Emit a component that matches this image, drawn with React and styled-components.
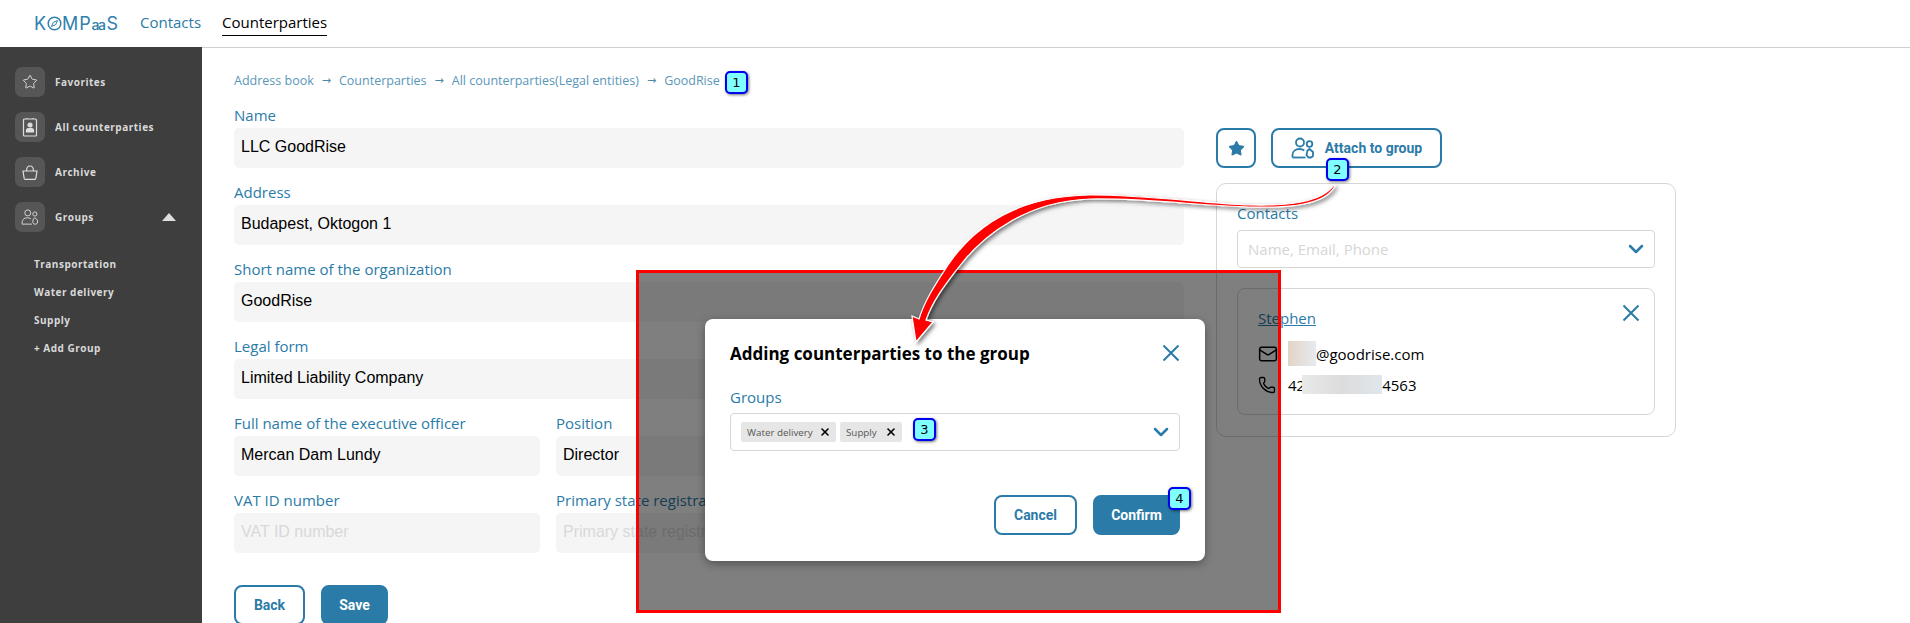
import React from 'react';
import styled, { createGlobalStyle } from 'styled-components';
import { ChevronDown, Mail, Phone, Star, X } from 'lucide-react';

const BLUE = '#2b7ba8';
const UI_FONT = '"Open Sans", "Noto Sans", sans-serif';

const GlobalStyle = createGlobalStyle`
  html, body {
    margin: 0;
    height: 623px;
    overflow: hidden;
    background: #ffffff;
    font-family: ${UI_FONT};
  }
  * {
    box-sizing: border-box;
  }
`;

const Page = styled.div`
  position: relative;
  width: 1910px;
  height: 623px;
  overflow: hidden;
  display: flex;
  flex-direction: column;
`;

const Header = styled.header`
  height: 47px;
  flex-shrink: 0;
  display: flex;
  align-items: center;
  padding-left: 34px;
`;

const Logo = styled.div`
  width: 85px;
  margin-right: 21px;
  display: flex;
  align-items: center;
  color: #2f80ad;
  font-family: Inter, sans-serif;
  font-size: 18px;
  line-height: 20px;
  letter-spacing: 0.9px;
  white-space: nowrap;
`;

const LogoSmall = styled.span`
  font-size: 14px;
  font-weight: 500;
  letter-spacing: -1.5px;
  margin: 2px 2px 0 0;
`;

const NavLink = styled.a`
  height: 25px;
  margin-right: 21px;
  font-size: 15px;
  line-height: 22px;
  color: ${p => (p.$active ? '#000000' : BLUE)};
  border-bottom: 1px solid ${p => (p.$active ? '#000000' : 'transparent')};
`;

const Body = styled.div`
  flex: 1;
  display: flex;
  min-height: 0;
`;

const Sidebar = styled.nav`
  width: 202px;
  flex-shrink: 0;
  background: #3e3e3e;
  padding: 20px 0 0 15px;
  color: #d9d9d9;
  font-size: 10px;
  font-weight: 700;
  letter-spacing: 0.5px;
`;

const SideList = styled.div`
  display: flex;
  flex-direction: column;
  gap: 15px;
`;

const SideItem = styled.div`
  width: 161px;
  display: flex;
  align-items: center;
  gap: 10px;
  height: 30px;
`;

const SideIcon = styled.span`
  width: 30px;
  height: 30px;
  border-radius: 7px;
  background: #565656;
  display: flex;
  align-items: center;
  justify-content: center;
  color: #dedede;
`;

const SideLabel = styled.span`
  margin-bottom: 1px;
`;

const Caret = styled.span`
  width: 0;
  height: 0;
  margin-left: auto;
  border-left: 7px solid transparent;
  border-right: 7px solid transparent;
  border-bottom: 8px solid #dedede;
`;

const SubList = styled.div`
  margin: 19px 0 0 19px;
`;

const SubItem = styled.div`
  height: 28px;
  line-height: 26px;
`;

const Main = styled.main`
  flex: 1;
  border-top: 1px solid #cfcfcf;
  padding: 22px 0 0 32px;
`;

const Breadcrumbs = styled.div`
  height: 20px;
  display: flex;
  align-items: center;
  font-size: 12.5px;
  color: #5a96b9;
`;

const CrumbArrow = styled.span`
  margin: 0 8px;
  color: #4f87a8;
  font-size: 11px;
  font-family: "DejaVu Sans", sans-serif;
`;

const Content = styled.div`
  margin-top: 14px;
  display: flex;
  gap: 32px;
`;

const Form = styled.div`
  width: 950px;
  display: flex;
  flex-direction: column;
`;

const FieldRow = styled.div`
  display: grid;
  grid-template-columns: repeat(3, 306px);
  column-gap: 16px;
`;

const Field = styled.div`
  margin-bottom: 13px;
`;

const Label = styled.div`
  height: 24px;
  font-size: 15px;
  line-height: 22px;
  color: ${BLUE};
  white-space: nowrap;
`;

const Value = styled.div`
  height: 40px;
  border-radius: 5px;
  background: #f5f5f5;
  padding-left: 7px;
  font-family: "Liberation Sans", Arial, sans-serif;
  font-size: 16px;
  line-height: 38px;
  white-space: nowrap;
  overflow: hidden;
  color: ${p => (p.$placeholder ? '#d9d9d9' : '#000000')};
`;

const Actions = styled.div`
  display: flex;
  gap: 16px;
  justify-content: ${p => (p.$end ? 'flex-end' : 'flex-start')};
  margin-top: ${p => p.$top || 0}px;
`;

const Button = styled.button`
  height: 40px;
  width: ${p => p.$width}px;
  padding: 0;
  border: 2px solid ${BLUE};
  border-radius: 8px;
  background: ${p => (p.$primary ? BLUE : '#ffffff')};
  color: ${p => (p.$primary ? '#ffffff' : BLUE)};
  font-family: Roboto, sans-serif;
  font-size: 14px;
  font-weight: 700;
  display: flex;
  align-items: center;
  justify-content: center;
  gap: 10px;
`;

const Aside = styled.aside`
  width: 460px;
  padding-top: 24px;
`;

const AsideButtons = styled.div`
  display: flex;
  gap: 15px;
  margin-bottom: 15px;
`;

const Panel = styled.section`
  height: 254px;
  border: 1px solid #d6d6d6;
  border-radius: 10px;
  padding: 18px 20px 0;
`;

const Select = styled.div`
  height: 38px;
  margin-top: ${p => p.$top || 0}px;
  border: 1px solid #d6d6d6;
  border-radius: 4px;
  display: flex;
  align-items: center;
  justify-content: space-between;
  padding: 0 6px 0 10px;
  color: #d6d6d6;
  font-size: 15px;
`;

const ContactCard = styled.div`
  height: 127px;
  margin-top: 20px;
  border: 1px solid #d6d6d6;
  border-radius: 8px;
  padding: 15px 14px 0 20px;
`;

const ContactHead = styled.div`
  display: flex;
  justify-content: space-between;
  align-items: flex-start;
  height: 34px;
`;

const ContactName = styled.a`
  margin-top: 3px;
  font-size: 15px;
  line-height: 22px;
  color: ${BLUE};
  text-decoration: underline;
`;

const ContactRow = styled.div`
  display: flex;
  align-items: center;
  height: 31px;
  font-size: 15px;
  color: #000000;
`;

const RowIcon = styled.span`
  width: 30px;
  display: flex;
  align-items: center;
`;

const Blur = styled.span`
  display: inline-block;
  flex-shrink: 0;
  width: ${p => p.$width}px;
  height: ${p => p.$height}px;
  margin-left: ${p => p.$overlap || 0}px;
  background: ${p => p.$tint};
`;

const Dim = styled.div`
  position: absolute;
  left: 636px;
  top: 270px;
  width: 645px;
  height: 343px;
  border: 3px solid #ff0000;
  background: rgba(0, 0, 0, 0.5);
`;

const Modal = styled.div`
  position: absolute;
  left: 705px;
  top: 319px;
  width: 500px;
  height: 242px;
  background: #ffffff;
  border-radius: 8px;
  box-shadow: 0 3px 10px rgba(0, 0, 0, 0.35);
  padding: 20px 25px 25px;
`;

const ModalHead = styled.div`
  display: flex;
  align-items: center;
  justify-content: space-between;
  height: 28px;
  margin-bottom: 19px;
`;

const ModalTitle = styled.h3`
  margin: 0;
  font-size: 17px;
  font-weight: 700;
  color: #000000;
`;

const ChipList = styled.div`
  display: flex;
  gap: 4px;
`;

const Chip = styled.span`
  height: 20px;
  width: ${p => p.$width}px;
  border-radius: 2px;
  background: #e6e6e6;
  padding: 0 5px 0 6px;
  display: flex;
  align-items: center;
  justify-content: space-between;
  font-size: 9.8px;
  color: #555555;
`;

const ChipClose = styled.span`
  color: #000000;
  display: flex;
`;

const Badge = styled.span`
  position: absolute;
  left: ${p => p.$x}px;
  top: ${p => p.$y}px;
  width: 23px;
  height: 23px;
  border: 2.5px solid #0000f0;
  border-radius: 5px;
  background: #7fffff;
  box-shadow: 1px 1px 3px rgba(0, 0, 0, 0.55);
  display: flex;
  align-items: center;
  justify-content: center;
  font-family: "DejaVu Sans", sans-serif;
  font-size: 13px;
  color: #000000;
`;

const ArrowLayer = styled.svg`
  position: absolute;
  left: 0;
  top: 0;
  pointer-events: none;
`;

function CloseIcon() {
  return (
    <svg width="18" height="18" viewBox="0 0 18 18" fill="none" stroke={BLUE} strokeWidth="2">
      <path d="M1.5 1.500L16.500 16.500M16.500 1.500L1.500 16.500" />
    </svg>
  );
}

function GroupIcon({ size = 18, color = 'currentColor', width = 1.2 }) {
  return (
    <svg width={size} height={size} viewBox="0 0 24 24" fill="none" stroke={color} strokeWidth={width}>
      <circle cx="9" cy="6.500" r="4" />
      <path d="M1.500 21.500v-2.500c0-3.600 3-6 7-6 1.800 0 3.500.5 4.800 1.500" />
      <path d="M1.500 21.500h13" />
      <circle cx="18.500" cy="8" r="2.800" />
      <path d="M16.500 14.500l2-1.500 3.500 3v4l-2 1.500h-2.500l-2-2.500z" />
    </svg>
  );
}

function ContactIcon() {
  return (
    <svg width="18" height="20" viewBox="0 0 18 20" fill="none" stroke="currentColor" strokeWidth="1.2">
      <rect x="2.500" y="2" width="13" height="17" rx="1" />
      <path d="M6 2V1M12 2V1" />
      <circle cx="9" cy="8" r="2" fill="currentColor" />
      <path d="M5.500 15v-1.500c0-1.200 1-2 2-2h3c1 0 2 .8 2 2V15z" fill="currentColor" />
    </svg>
  );
}

function BasketIcon() {
  return (
    <svg width="18" height="18" viewBox="0 0 18 18" fill="none" stroke="currentColor" strokeWidth="1.2">
      <path d="M2 8h14l-1.200 7.500a1 1 0 0 1-1 .8H4.200a1 1 0 0 1-1-.8z" />
      <path d="M5.500 8c0-3 1.500-5 3.500-5s3.500 2 3.500 5" />
    </svg>
  );
}

function CompassIcon() {
  return (
    <svg width="15" height="15" viewBox="0 0 15 15" fill="none" stroke="#2f80ad">
      <circle cx="7.500" cy="7.500" r="6.300" strokeWidth="1.500" />
      <path d="M10.500 4.500L8.700 8.700 4.500 10.500 6.300 6.300z" strokeWidth="1" />
    </svg>
  );
}

const sideItems = [
  { label: 'Favorites', icon: <Star size={16} strokeWidth={1.4} /> },
  { label: 'All counterparties', icon: <ContactIcon /> },
  { label: 'Archive', icon: <BasketIcon /> },
];

function Crumbs() {
  const items = ['Address book', 'Counterparties', 'All counterparties(Legal entities)', 'GoodRise'];
  return (
    <Breadcrumbs>
      {items.map((item, i) => (
        <React.Fragment key={item}>
          {i > 0 && <CrumbArrow>{'→'}</CrumbArrow>}
          <span>{item}</span>
        </React.Fragment>
      ))}
    </Breadcrumbs>
  );
}

function FormField({ label, value, placeholder }) {
  return (
    <Field>
      <Label>{label}</Label>
      <Value $placeholder={!value}>{value || placeholder}</Value>
    </Field>
  );
}

export default function App() {
  return (
    <Page>
      <GlobalStyle />
      <Header>
        <Logo>
          K
          <CompassIcon />
          MP
          <LogoSmall>aa</LogoSmall>
          S
        </Logo>
        <NavLink>Contacts</NavLink>
        <NavLink $active>Counterparties</NavLink>
      </Header>
      <Body>
        <Sidebar>
          <SideList>
            {sideItems.map(item => (
              <SideItem key={item.label}>
                <SideIcon>{item.icon}</SideIcon>
                <SideLabel>{item.label}</SideLabel>
              </SideItem>
            ))}
            <SideItem>
              <SideIcon>
                <GroupIcon size={18} />
              </SideIcon>
              <SideLabel>Groups</SideLabel>
              <Caret />
            </SideItem>
          </SideList>
          <SubList>
            <SubItem>Transportation</SubItem>
            <SubItem>Water delivery</SubItem>
            <SubItem>Supply</SubItem>
            <SubItem>+ Add Group</SubItem>
          </SubList>
        </Sidebar>
        <Main>
          <Crumbs />
          <Content>
            <Form>
              <FormField label="Name" value="LLC GoodRise" />
              <FormField label="Address" value="Budapest, Oktogon 1" />
              <FormField label="Short name of the organization" value="GoodRise" />
              <FormField label="Legal form" value="Limited Liability Company" />
              <FieldRow>
                <FormField label="Full name of the executive officer" value="Mercan Dam Lundy" />
                <FormField label="Position" value="Director" />
              </FieldRow>
              <FieldRow>
                <FormField label="VAT ID number" placeholder="VAT ID number" />
                <FormField
                  label="Primary state registration number"
                  placeholder="Primary state registration number"
                />
              </FieldRow>
              <Actions $top={19}>
                <Button $width={71}>Back</Button>
                <Button $width={67} $primary>
                  Save
                </Button>
              </Actions>
            </Form>
            <Aside>
              <AsideButtons>
                <Button $width={40}>
                  <Star size={17} fill={BLUE} strokeWidth={1.5} />
                </Button>
                <Button $width={171}>
                  <GroupIcon size={24} color={BLUE} width={1.8} />
                  Attach to group
                </Button>
              </AsideButtons>
              <Panel>
                <Label>Contacts</Label>
                <Select $top={4}>
                  Name, Email, Phone
                  <ChevronDown size={24} color={BLUE} strokeWidth={2.5} />
                </Select>
                <ContactCard>
                  <ContactHead>
                    <ContactName>Stephen</ContactName>
                    <CloseIcon />
                  </ContactHead>
                  <ContactRow>
                    <RowIcon>
                      <Mail size={20} strokeWidth={1.8} />
                    </RowIcon>
                    <Blur $width={28} $height={25} $tint="linear-gradient(90deg, #e3d3c7, #e6ebef)" />
                    @goodrise.com
                  </ContactRow>
                  <ContactRow>
                    <RowIcon>
                      <Phone size={18} strokeWidth={1.8} />
                    </RowIcon>
                    42
                    <Blur
                      $width={80}
                      $height={19}
                      $overlap={-3}
                      $tint="linear-gradient(90deg, #e9e9e9, #dcdcdc 50%, #dfe6ec)"
                    />
                    4563
                  </ContactRow>
                </ContactCard>
              </Panel>
            </Aside>
          </Content>
        </Main>
      </Body>

      <Dim />
      <Modal>
        <ModalHead>
          <ModalTitle>Adding counterparties to the group</ModalTitle>
          <CloseIcon />
        </ModalHead>
        <Label>Groups</Label>
        <Select $top={3}>
          <ChipList>
            <Chip $width={95}>
              Water delivery
              <ChipClose>
                <X size={12} strokeWidth={3.2} />
              </ChipClose>
            </Chip>
            <Chip $width={62}>
              Supply
              <ChipClose>
                <X size={12} strokeWidth={3.2} />
              </ChipClose>
            </Chip>
          </ChipList>
          <ChevronDown size={24} color={BLUE} strokeWidth={2.5} />
        </Select>
        <Actions $end $top={44}>
          <Button $width={83}>Cancel</Button>
          <Button $width={87} $primary>
            Confirm
          </Button>
        </Actions>
      </Modal>

      <ArrowLayer width="1910" height="623">
        <defs>
          <filter id="arrowShadow" x="-5%" y="-5%" width="110%" height="115%">
            <feDropShadow dx="2" dy="2" stdDeviation="2" floodColor="#000000" floodOpacity="0.55" />
          </filter>
        </defs>
        <path
          d="M1334 185C1322 202 1290 206 1250 205C1200 203 1150 195 1090 195C1020 196 975 225 948 265C935 285 925 300 919 319L912 316L916 342L933 322L926 320C933 300 945 285 958 268C985 232 1030 201 1090 199C1150 198 1200 206 1250 207C1290 208 1325 205 1335 186Z"
          fill="#ff0000"
          stroke="#ffffff"
          strokeWidth="1.2"
          filter="url(#arrowShadow)"
        />
      </ArrowLayer>
      <Badge $x={725} $y={71}>1</Badge>
      <Badge $x={1326} $y={158}>2</Badge>
      <Badge $x={913} $y={418}>3</Badge>
      <Badge $x={1168} $y={487}>4</Badge>
    </Page>
  );
}
